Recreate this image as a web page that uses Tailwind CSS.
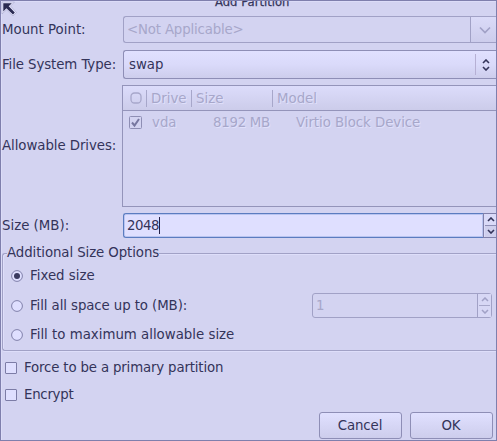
<!DOCTYPE html>
<html lang="en">
<head>
<meta charset="utf-8">
<title>Add Partition</title>
<script src="https://cdn.jsdelivr.net/npm/@tailwindcss/browser@4"></script>
</head>
<body class="w-[497px] h-[441px] overflow-hidden">
<main class="relative w-[497px] h-[441px] overflow-hidden border border-[#7f7fad] bg-[#d3d3f1] text-[#34345a] text-[13.33px] leading-[16px] font-['DejaVu_Sans',sans-serif] whitespace-nowrap shadow-[inset_1px_1px_0_#dcdcf8] flex flex-col">
  <svg class="absolute left-0 top-0" width="18" height="18" viewBox="0 0 18 18"><path d="M1 1H13.5L9.5 5L15.5 11.5L12 15L5.5 8.8L1 13Z" fill="#e4e4fb" stroke="#a9a9cc" stroke-width=".6"/><path d="M2.3 2.3H10.8L7.7 5.2L13.8 11.6L12 13.4L5.4 7.2L2.3 10.6Z" fill="#2b2b52"/></svg>

  <header class="h-[15px] shrink-0 overflow-hidden text-[11.6px] pl-[214px] font-medium"><h1 class="-mt-[6px] leading-[14px] [-webkit-text-stroke:0.25px]">Add Partition</h1></header>

  <!-- Mount point -->
  <div class="flex items-center h-[27px] shrink-0">
    <label class="w-[122px] pl-px">Mount Point:</label>
    <div class="flex flex-1 h-full border border-r-0 border-[#a1a1c6] rounded-l-[3px] text-[#a7a7ca]">
      <span class="flex-1 pl-[3px] leading-[25px] tracking-[-0.17px]">&lt;Not Applicable&gt;</span>
      <span class="w-[26px] border-l border-[#a1a1c6] bg-linear-to-b from-[#dadaf8] to-[#cdcdec] flex items-center justify-center pl-[2px]">
        <svg width="12" height="8" viewBox="0 0 12 8" fill="none" stroke="#a1a1c6" stroke-width="1.7"><path d="M1 1.5L6 6.5L11 1.5"/></svg>
      </span>
    </div>
  </div>

  <!-- File system type -->
  <div class="flex items-center h-[29px] mt-[7px] shrink-0">
    <label class="w-[122px] pl-px tracking-[-0.09px]">File System Type:</label>
    <div class="flex flex-1 items-center h-full border border-r-0 border-[#8e8eb6] rounded-l-[3px] bg-linear-to-b from-[#e0e0ff] via-[#dadafa] to-[#cdcdec]">
      <span class="flex-1 pl-[5px]">swap</span>
      <span class="w-[21px] h-[21px] border-l border-[#b6b0d4] flex items-center justify-center">
        <svg width="8" height="12" viewBox="0 0 8 12" fill="none" stroke="#34345a" stroke-width="1.6"><path d="M1 4L4 1L7 4M1 8L4 11L7 8"/></svg>
      </span>
    </div>
  </div>

  <!-- Drives -->
  <div class="flex items-center h-[122px] mt-[6px] shrink-0">
    <label class="w-[121px] pl-px tracking-[-0.06px]">Allowable Drives:</label>
    <div class="flex-1 h-full border border-r-0 border-[#9494ba] text-[#a7a7ca] [text-shadow:1px_1px_0_#e0e0fb]">
      <div class="flex items-center h-[25px] border-b border-[#9494ba] bg-linear-to-b from-[#dcdcfb] to-[#ccccea]">
        <span class="w-[23px] flex justify-center pl-[2px]"><svg width="12" height="12" viewBox="0 0 12 12"><rect x="1" y="1" width="10" height="10" rx="3.5" fill="none" stroke="#a7a7ca" stroke-width="1.3"/></svg></span>
        <span class="w-[45px] h-[17px] leading-[18px] border-l border-[#a7a7ca] pl-[4px]">Drive</span>
        <span class="w-[81px] h-[17px] leading-[18px] border-l border-[#a7a7ca] pl-[4px]">Size</span>
        <span class="h-[17px] leading-[18px] border-l border-[#a7a7ca] pl-[4px]">Model</span>
      </div>
      <div class="flex items-center h-[23px]">
        <span class="w-[29px] pl-[6px]"><svg width="13" height="13" viewBox="0 0 13 13" fill="none"><rect x=".5" y=".5" width="12" height="12" rx="1" stroke="#8e8eb4"/><path d="M3 6.5L5.5 9.5L10 3" stroke="#7777a0" stroke-width="2"/></svg></span>
        <span class="w-[61px]">vda</span>
        <span class="w-[83px] tracking-[-0.27px]">8192 MB</span>
        <span class="tracking-[-0.05px]">Virtio Block Device</span>
      </div>
    </div>
  </div>

  <!-- Size -->
  <div class="flex items-center h-[25px] mt-[6px] shrink-0">
    <label class="w-[122px] pl-px">Size (MB):</label>
    <div class="flex flex-1 h-full">
      <span class="flex-1 flex items-center border border-r-0 border-[#5b7cc0] rounded-l-[3px] bg-[#dfdfff] pl-[3px] tracking-[-0.48px] shadow-[inset_0_0_0_1px_#b9c4f0]">2048<i class="w-px h-[17px] bg-[#22224a]"></i></span>
      <span class="w-[13px] border-y border-l border-[#8080aa] flex flex-col bg-[#dadaf8]">
        <i class="h-[12px] border-b border-[#8e8eb6] flex items-center justify-center ml-px"><svg width="8" height="5" viewBox="0 0 8 5" fill="none" stroke="#34345a" stroke-width="1.6"><path d="M1 4L4 1L7 4"/></svg></i>
        <i class="flex-1 bg-[#cfcfed] flex items-center justify-center ml-px"><svg width="8" height="5" viewBox="0 0 8 5" fill="none" stroke="#34345a" stroke-width="1.6"><path d="M1 1L4 4L7 1"/></svg></i>
      </span>
    </div>
  </div>

  <!-- Additional options -->
  <section class="h-[98px] mt-[15px] ml-px shrink-0 border border-r-0 border-[#a1a1c6] rounded-l-[3px] shadow-[0_1px_0_#dedefa,inset_1px_1px_0_#dedefa]">
    <h2 class="w-[152px] h-[16px] -mt-[9px] ml-[4px] bg-[#d3d3f1] tracking-[-0.09px]">Additional Size Options</h2>
    <div class="flex items-center h-[29px] pl-[8px] gap-[7px]"><svg width="12" height="12" viewBox="0 0 12 12"><circle cx="6" cy="6" r="5.4" fill="#dfdfff" stroke="#8080aa"/><circle cx="6" cy="6" r="3" fill="#3a3a60"/></svg><span>Fixed size</span></div>
    <div class="flex items-center h-[31px] pl-[8px] gap-[7px]"><svg width="12" height="12" viewBox="0 0 12 12"><circle cx="6" cy="6" r="5.4" fill="#dfdfff" stroke="#8080aa"/></svg><span class="flex-1 pt-px tracking-[-0.09px]">Fill all space up to (MB):</span>
      <div class="flex w-[180px] h-[25px] mr-[4px] border border-[#a1a1c6] rounded-[3px] text-[#a7a7ca]">
        <span class="flex-1 pl-[3px] leading-[23px]">1</span>
        <span class="w-[14px] border-l border-[#a1a1c6] bg-[#d7d7f5] flex flex-col">
          <i class="h-[12px] border-b border-[#a7a7ca] mx-px flex items-center justify-center"><svg width="8" height="5" viewBox="0 0 8 5" fill="none" stroke="#a1a1c6" stroke-width="1.5"><path d="M1 4L4 1L7 4"/></svg></i>
          <i class="flex-1 flex items-center justify-center"><svg width="8" height="5" viewBox="0 0 8 5" fill="none" stroke="#a1a1c6" stroke-width="1.5"><path d="M1 1L4 4L7 1"/></svg></i>
        </span>
      </div>
    </div>
    <div class="flex items-center h-[28px] pl-[8px] gap-[7px]"><svg width="12" height="12" viewBox="0 0 12 12"><circle cx="6" cy="6" r="5.4" fill="#dfdfff" stroke="#8080aa"/></svg><span>Fill to maximum allowable size</span></div>
  </section>

  <div class="flex items-center h-[27px] mt-[3px] pl-[4px] gap-[7px] shrink-0"><i class="size-[12px] border border-[#7c7ca6] bg-[#dfdfff] rounded-[1px]"></i><span class="tracking-[-0.16px]">Force to be a primary partition</span></div>
  <div class="flex items-center h-[27px] pl-[4px] gap-[7px] shrink-0"><i class="size-[12px] border border-[#7c7ca6] bg-[#dfdfff] rounded-[1px]"></i><span class="tracking-[-0.27px]">Encrypt</span></div>

  <footer class="flex justify-end gap-[8px] mt-[4px] pr-[3px] h-[27px] shrink-0">
    <button class="w-[83px] border border-[#8e8eb6] rounded-[3px] bg-linear-to-b from-[#e0e0ff] to-[#cdcdec] tracking-[-0.1px] pr-px">Cancel</button>
    <button class="w-[83px] border border-[#8e8eb6] rounded-[3px] bg-linear-to-b from-[#e0e0ff] to-[#cdcdec] pr-px">OK</button>
  </footer>
</main>
</body>
</html>
